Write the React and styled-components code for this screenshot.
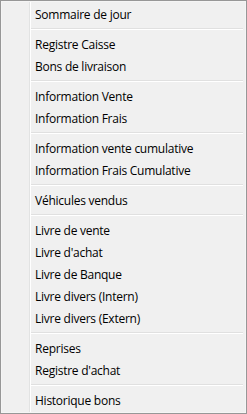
import React from "react";
import styled, { createGlobalStyle } from "styled-components";

const Global = createGlobalStyle`
  html, body { margin: 0; padding: 0; background: #f0f0f0; }
  body { font-family: "Open Sans", "Noto Sans", "Liberation Sans", sans-serif; }
`;

const Menu = styled.ul`
  box-sizing: border-box;
  width: 247px;
  height: 414px;
  margin: 0;
  padding: 2px;
  list-style: none;
  border: 1px solid #979797;
  box-shadow: inset 0 0 0 1px #f5f5f5;
  background:
    linear-gradient(
      to right,
      transparent 28px,
      #e2e3e3 28px,
      #e2e3e3 29px,
      #ffffff 29px,
      #ffffff 30px,
      transparent 30px
    ),
    #f0f0f0;
  background-origin: padding-box;
`;

const Item = styled.li`
  height: 22px;
  display: flex;
  align-items: center;
  padding-left: 32px;
  font-size: 12px;
  color: #000;
  white-space: nowrap;
  letter-spacing: -0.25px;
`;

const Separator = styled.li`
  height: 8px;
  display: flex;
  align-items: center;
  margin: 0 1px 0 28px;
  &::before {
    content: "";
    flex: 1;
    height: 0;
    border-top: 1px solid #e0e0e0;
    border-bottom: 1px solid #ffffff;
  }
`;

const sections = [
  ["Sommaire de jour"],
  ["Registre Caisse", "Bons de livraison"],
  ["Information Vente", "Information Frais"],
  ["Information vente cumulative", "Information Frais Cumulative"],
  ["Véhicules vendus"],
  ["Livre de vente", "Livre d'achat", "Livre de Banque", "Livre divers (Intern)", "Livre divers (Extern)"],
  ["Reprises", "Registre d'achat"],
  ["Historique bons"],
];

export default function App() {
  return (
    <>
      <Global />
      <Menu>
        {sections.map((sec, i) => (
          <React.Fragment key={i}>
            {i > 0 && <Separator />}
            {sec.map((label) => (
              <Item key={label}>{label}</Item>
            ))}
          </React.Fragment>
        ))}
      </Menu>
    </>
  );
}
